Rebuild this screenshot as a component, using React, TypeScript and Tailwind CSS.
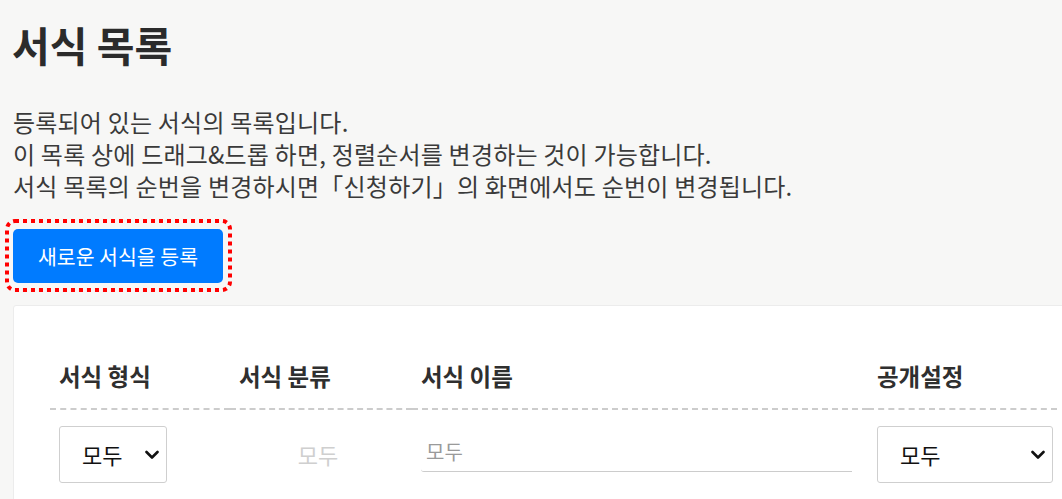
import React from "react";

const font = { fontFamily: '"Noto Sans CJK KR", "Noto Sans", sans-serif' };

const Chevron: React.FC = () => (
  <svg width="14" height="10" viewBox="0 0 14 10" fill="none">
    <polyline points="1.5,2 7,7.5 12.5,2" stroke="#111" strokeWidth="2.6" strokeLinecap="round" strokeLinejoin="round" />
  </svg>
);

const FakeSelect: React.FC<{ width: string; label: string }> = ({ width, label }) => (
  <div className={`${width} h-[57px] flex items-center justify-between pl-[22px] pr-[7px] border border-[#cfcfcf] rounded-[3px] bg-white`}>
    <span className="text-[22px] text-[#111]">{label}</span>
    <Chevron />
  </div>
);

const columns = ["서식 형식", "서식 분류", "서식 이름", "공개설정"];

const App: React.FC = () => {
  return (
    <div className="min-h-screen w-screen overflow-hidden bg-[#f7f7f6] text-[#333]" style={font}>
      <div className="pl-[13px] pt-[21px]">
        <h1 className="text-[41px] leading-[46px] font-bold text-[#2b2b2b] -ml-[1px]">서식 목록</h1>

        <div className="mt-[39px] text-[24px] leading-[32px] tracking-[0.2px] text-[#3a3a3a]">
          <p>등록되어 있는 서식의 목록입니다.</p>
          <p>이 목록 상에 드래그&amp;드롭 하면, 정렬순서를 변경하는 것이 가능합니다.</p>
          <p>서식 목록의 순번을 변경하시면「신청하기」의 화면에서도 순번이 변경됩니다.</p>
        </div>

        <div className="relative mt-[27px] w-[210px]">
          <button className="w-[210px] h-[54px] rounded-[5px] bg-[#007bff] text-white text-[20.5px]">
            새로운 서식을 등록
          </button>
          <svg className="absolute left-[-8px] top-[-10px]" width="227" height="73" viewBox="0 0 227 73" fill="none">
            <rect x="2" y="2" width="223" height="69" rx="8" stroke="#ff0000" strokeWidth="4" strokeDasharray="4 4" />
          </svg>
        </div>

        <div className="mt-[22px] w-[1120px] bg-white border border-[#ececec] rounded-tl-[3px] pl-[36px] pt-[40px] min-h-[200px]">
          <div className="grid grid-cols-[180px_182px_456px_189px]">
            {columns.map((c) => (
              <div key={c} className="pl-[9px] pt-[15px] pb-[17px] text-[23.5px] leading-[30px] font-bold text-[#2f2f2f] border-b-2 border-dashed border-[#cccccc]">
                {c}
              </div>
            ))}

            <div className="pl-[9px] pt-[16px]">
              <FakeSelect width="w-[108px]" label="모두" />
            </div>
            <div className="pt-[16px] h-[73px] flex items-center justify-center">
              <span className="text-[22px] text-[#cfcfcf] mr-[6px]">모두</span>
            </div>
            <div className="pl-[9px] pr-[16px] pt-[16px]">
              <div className="h-[46px] border-b border-[#cccccc] rounded-bl-[3px] flex items-center pl-[5px] pt-[6px]">
                <span className="text-[20px] text-[#9a9a9a]">모두</span>
              </div>
            </div>
            <div className="pl-[9px] pr-[4px] pt-[16px]">
              <FakeSelect width="w-[176px]" label="모두" />
            </div>
          </div>
        </div>
      </div>
    </div>
  );
};

export default App;
